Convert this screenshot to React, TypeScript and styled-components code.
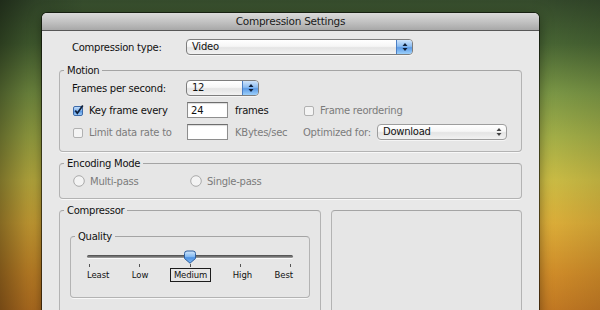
import React from "react";
import styled, {createGlobalStyle} from "styled-components";

const Page = createGlobalStyle`
  html, body {
    margin: 0;
    width: 600px;
    height: 310px;
    overflow: hidden;
  }
  body {
    font-family: "DejaVu Sans", "Noto Sans", sans-serif;
    font-size: 10px;
    letter-spacing: -0.25px;
    color: #111;
    background:
      linear-gradient(90deg, rgba(0, 0, 0, .42) 0%, rgba(0, 0, 0, .14) 6%, rgba(0, 0, 0, 0) 14%, rgba(0, 0, 0, 0) 88%, rgba(0, 0, 0, .12) 100%),
      linear-gradient(180deg, #354b2c 0%, #4a6835 14%, #7f9c48 30%, #a9b54a 44%, #d2c347 58%, #e4b43b 72%, #d8922b 88%, #c97d24 100%);
  }
`

const Desktop = styled.div`
  padding: 13px 0 0 42px;
`

const Window = styled.div`
  width: 497px;
  height: 320px;
  background: #e8e8e8;
  border-radius: 5px 5px 0 0;
  box-shadow: 0 0 0 1px rgba(0, 0, 0, .55), 0 4px 14px rgba(0, 0, 0, .5);
  overflow: hidden;
`

const TitleBar = styled.div`
  height: 17px;
  line-height: 17px;
  text-align: center;
  font-size: 10.5px;
  color: #1a1a1a;
  background: linear-gradient(180deg, #dadada 0%, #c3c3c3 50%, #a8a8a8 100%);
  border-bottom: 1px solid #575757;
`

const Body = styled.div`
  padding: 8px 17px 0;
`

const Row = styled.div<{ $h?: number, $top?: number }>`
  display: flex;
  align-items: center;
  height: ${p => p.$h ?? 16}px;
  margin-top: ${p => p.$top ?? 0}px;
`

const Label = styled.span<{ $w?: number, $dim?: boolean, $indent?: number }>`
  flex: none;
  width: ${p => p.$w ? `${p.$w}px` : "auto"};
  padding-left: ${p => p.$indent ?? 0}px;
  box-sizing: border-box;
  color: ${p => p.$dim ? "#7b7b7b" : "#111"};
  white-space: nowrap;
`

const PopupBox = styled.div<{ $w: number, $off?: boolean }>`
  flex: none;
  display: flex;
  width: ${p => p.$w}px;
  height: 16px;
  box-sizing: border-box;
  border: 1px solid ${p => p.$off ? "#9d9d9d" : "#7d7d7d"};
  border-radius: 4px;
  overflow: hidden;
  background: linear-gradient(180deg, #ffffff 0%, #f6f6f6 45%, #e4e4e4 55%, #f2f2f2 100%);
  box-shadow: 0 1px 0 rgba(255, 255, 255, .6);
`

const PopupText = styled.span`
  flex: 1;
  padding-left: 5px;
  line-height: 14px;
  color: #111;
`

const PopupArrows = styled.div<{ $blue?: boolean }>`
  flex: none;
  width: 15px;
  display: flex;
  align-items: center;
  justify-content: center;
  border-left: 1px solid ${p => p.$blue ? "#4b7fc4" : "transparent"};
  background: ${p => p.$blue
    ? "linear-gradient(180deg, #cfe4fb 0%, #8dbdf1 45%, #5d9be6 55%, #9cd0fb 100%)"
    : "transparent"};
`

function Popup(props: { value: string, width: number, off?: boolean }) {
  return <PopupBox $w={props.width} $off={props.off}>
    <PopupText>{props.value}</PopupText>
    <PopupArrows $blue={!props.off}>
      <svg width="6" height="10" viewBox="0 0 6 10">
        <path d="M3 1 L5.5 4 H0.5 Z M3 9 L5.5 6 H0.5 Z" fill={props.off ? "#444" : "#10203a"}/>
      </svg>
    </PopupArrows>
  </PopupBox>
}

const Field = styled.input`
  flex: none;
  width: 41px;
  height: 16px;
  box-sizing: border-box;
  margin: 0 0 0 1px;
  padding: 0 3px;
  border: 1px solid #8e8e8e;
  border-top-color: #6e6e6e;
  background: #fff;
  font: inherit;
  color: #111;
  outline: none;
  box-shadow: inset 0 1px 1px rgba(0, 0, 0, .15);
`

const Group = styled.fieldset<{ $w?: number, $top?: number }>`
  margin: ${p => p.$top ?? 0}px 0 0;
  padding: 0;
  min-width: 0;
  width: ${p => p.$w ? `${p.$w}px` : "auto"};
  box-sizing: border-box;
  border: 1px solid #b3b3b3;
  border-top-color: #a4a4a4;
  border-radius: 4px;
  background: #e6e6e6;
  box-shadow: 0 1px 0 rgba(255, 255, 255, .7);
`

const Legend = styled.legend`
  margin-left: 4px;
  padding: 0 3px;
  font-size: 10px;
  line-height: 13px;
  color: #111;
`

const GroupBody = styled.div<{ $pad: string }>`
  padding: ${p => p.$pad};
`

const CheckItem = styled.span<{ $w?: number, $dim?: boolean }>`
  flex: none;
  display: flex;
  align-items: center;
  gap: 5px;
  width: ${p => p.$w ? `${p.$w}px` : "auto"};
  padding-left: 1px;
  box-sizing: border-box;
  color: ${p => p.$dim ? "#7b7b7b" : "#111"};
  white-space: nowrap;
`

function CheckBox(props: { checked?: boolean }) {
  if (props.checked) {
    return <svg width="11" height="11" viewBox="0 0 11 11">
      <defs>
        <linearGradient id="cbBlue" x1="0" y1="0" x2="0" y2="1">
          <stop offset="0" stopColor="#c9e1fb"/>
          <stop offset="0.5" stopColor="#7fb3ee"/>
          <stop offset="0.55" stopColor="#5b98e4"/>
          <stop offset="1" stopColor="#a6d3fb"/>
        </linearGradient>
      </defs>
      <rect x="0.5" y="1.5" width="9" height="9" rx="1.5" fill="url(#cbBlue)" stroke="#3e6aa8"/>
      <path d="M2.3 5.6 L4.3 8.3 L9.8 0.6" fill="none" stroke="#10203a" strokeWidth="1.7"/>
    </svg>
  }
  return <svg width="11" height="11" viewBox="0 0 11 11">
    <rect x="0.5" y="1.5" width="9" height="9" rx="1.5" fill="#f4f4f4" stroke="#b1b1b1"/>
  </svg>
}

function Radio() {
  return <svg width="12" height="12" viewBox="0 0 12 12">
    <circle cx="6" cy="6" r="5.3" fill="#f3f3f3" stroke="#a9a9a9"/>
  </svg>
}

const PanelRow = styled.div`
  display: flex;
  align-items: flex-start;
  gap: 10px;
  margin-top: 5px;
`

const EmptyPanel = styled.div`
  flex: 1;
  height: 120px;
  margin-top: 6px;
  border: 1px solid #b3b3b3;
  border-top-color: #a4a4a4;
  border-radius: 4px;
  background: #e6e6e6;
`

const SliderArea = styled.div`
  padding: 0 16px;
`

const Track = styled.div`
  position: relative;
  height: 16px;
  margin-top: 7px;

  &::before {
    content: "";
    position: absolute;
    left: 0;
    right: 0;
    top: 5px;
    height: 3px;
    border-radius: 2px;
    background: linear-gradient(180deg, #4a4a4a 0%, #7a7a7a 60%, #a8a8a8 100%);
    box-shadow: 0 1px 0 rgba(255, 255, 255, .8);
  }
`

const Thumb = styled.svg`
  position: absolute;
  top: 0;
  left: 50%;
  margin-left: -7px;
`

const Ticks = styled.div`
  display: flex;
  justify-content: space-between;
  height: 3px;
  margin-top: -2px;
  padding: 0 2px;
`

const Tick = styled.span`
  width: 1px;
  height: 3px;
  background: #555;
`

const TickLabels = styled.div`
  display: flex;
  justify-content: space-between;
  align-items: center;
  height: 15px;
  margin: 0 -1px;
  font-size: 8.5px;
  letter-spacing: -0.1px;
`

const TickLabel = styled.span<{ $on?: boolean }>`
  height: 12px;
  line-height: 12px;
  padding: 0 ${p => p.$on ? 3 : 0}px;
  border: 1px solid ${p => p.$on ? "#1d1d1d" : "transparent"};
  color: #111;
`

const levels = ["Least", "Low", "Medium", "High", "Best"]

export default function App() {
  return <>
    <Page/>
    <Desktop>
      <Window>
        <TitleBar>Compression Settings</TitleBar>
        <Body>
          <Row>
            <Label $w={127} $indent={13}>Compression type:</Label>
            <Popup value="Video" width={227}/>
          </Row>

          <Group $top={9}>
            <Legend>Motion</Legend>
            <GroupBody $pad="3px 12px 11px">
              <Row>
                <Label $w={114}>Frames per second:</Label>
                <Popup value="12" width={73}/>
              </Row>
              <Row $top={6}>
                <CheckItem $w={114}><CheckBox checked/>Key frame every</CheckItem>
                <Field readOnly value="24"/>
                <Label $w={75} $indent={7}>frames</Label>
                <CheckItem $dim><CheckBox/>Frame reordering</CheckItem>
              </Row>
              <Row $top={6}>
                <CheckItem $w={114} $dim><CheckBox/>Limit data rate to</CheckItem>
                <Field readOnly value=""/>
                <Label $w={75} $indent={7} $dim>KBytes/sec</Label>
                <Label $w={74} $dim>Optimized for:</Label>
                <Popup value="Download" width={130} off/>
              </Row>
            </GroupBody>
          </Group>

          <Group $top={5}>
            <Legend>Encoding Mode</Legend>
            <GroupBody $pad="4px 12px 10px">
              <Row $h={14}>
                <CheckItem $w={117} $dim><Radio/>Multi-pass</CheckItem>
                <CheckItem $dim><Radio/>Single-pass</CheckItem>
              </Row>
            </GroupBody>
          </Group>

          <PanelRow>
            <Group $w={262}>
              <Legend>Compressor</Legend>
              <GroupBody $pad="13px 10px 30px">
                <Group>
                  <Legend>Quality</Legend>
                  <GroupBody $pad="0 0 15px">
                    <SliderArea>
                      <Track>
                        <Thumb width="14" height="14" viewBox="0 0 14 14">
                          <defs>
                            <linearGradient id="thumbBlue" x1="0" y1="0" x2="0" y2="1">
                              <stop offset="0" stopColor="#d2e7fc"/>
                              <stop offset="0.45" stopColor="#86bbf2"/>
                              <stop offset="0.55" stopColor="#4f92e2"/>
                              <stop offset="1" stopColor="#7fbaf5"/>
                            </linearGradient>
                          </defs>
                          <path d="M1.5 3.5 Q1.5 1 4 1 H10 Q12.5 1 12.5 3.5 V8.5 L7 13.2 L1.5 8.5 Z"
                                fill="url(#thumbBlue)" stroke="#2f5f9e"/>
                        </Thumb>
                      </Track>
                      <Ticks>
                        {levels.map(l => <Tick key={l}/>)}
                      </Ticks>
                      <TickLabels>
                        {levels.map(l => <TickLabel key={l} $on={l === "Medium"}>{l}</TickLabel>)}
                      </TickLabels>
                    </SliderArea>
                  </GroupBody>
                </Group>
              </GroupBody>
            </Group>
            <EmptyPanel/>
          </PanelRow>
        </Body>
      </Window>
    </Desktop>
  </>
}
